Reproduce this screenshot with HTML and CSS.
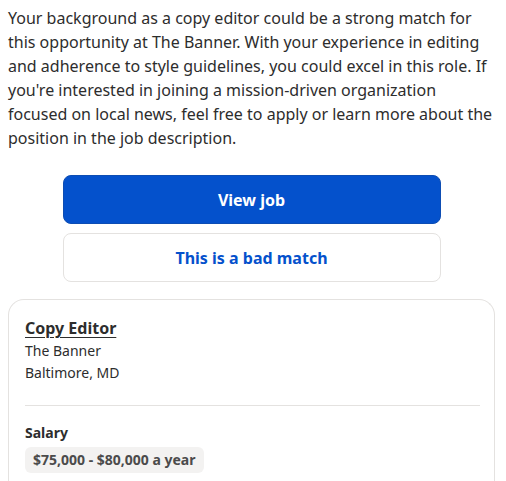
FILE: index.html
```html
<!DOCTYPE html>
<html lang="en">
<head>
<meta charset="utf-8">
<title>Job match</title>
<link rel="stylesheet" href="styles.css">
</head>
<body>
<div class="page">
  <p class="intro">Your background as a copy editor could be a strong match for this opportunity at The Banner. With your experience in editing and adherence to style guidelines, you could excel in this role. If you're interested in joining a mission-driven organization focused on local news, feel free to apply or learn more about the position in the job description.</p>
  <div class="actions">
    <button class="btn btn-primary">View job</button>
    <button class="btn btn-secondary">This is a bad match</button>
  </div>
  <div class="card">
    <div class="card-head">
      <a class="job-title" href="#">Copy Editor</a>
      <div class="meta">The Banner</div>
      <div class="meta">Baltimore, MD</div>
    </div>
    <div class="card-section">
      <div class="section-label">Salary</div>
      <span class="pill">$75,000 - $80,000 a year</span>
    </div>
  </div>
</div>
</body>
</html>
```
FILE: styles.css
```css
* { box-sizing: border-box; }
html, body { margin: 0; background: #fff; }
body {
  font-family: "Noto Sans", "Open Sans", sans-serif;
  color: #2d2d2d;
}
.page {
  padding: 6px 11px 0 8px;
}
.intro {
  margin: 0;
  font-size: 16px;
  line-height: 24px;
}
.actions {
  display: flex;
  flex-direction: column;
  align-items: center;
  gap: 9px;
  margin-top: 25px;
}
.btn {
  width: 378px;
  height: 49px;
  border-radius: 8px;
  font-family: inherit;
  font-size: 16px;
  font-weight: 700;
  cursor: pointer;
}
.btn-primary {
  background: #0451cc;
  color: #fff;
  border: 1px solid #0d4db3;
}
.btn-secondary {
  background: #fff;
  color: #0451cc;
  border: 1px solid #e4e2e0;
}
.card {
  margin-top: 17px;
  border: 1px solid #e4e2e0;
  border-bottom: none;
  border-radius: 16px 16px 0 0;
  padding: 16px 14px 20px 16px;
}
.card-head {
  padding-bottom: 21px;
  border-bottom: 1px solid #e4e2e0;
}
.job-title {
  display: block;
  color: #2d2d2d;
  font-size: 16px;
  line-height: 24px;
  font-weight: 700;
  text-decoration: underline;
  text-underline-offset: 3px;
}
.meta {
  font-size: 14px;
  line-height: 22px;
}
.card-section {
  padding-top: 16px;
}
.section-label {
  font-size: 14px;
  line-height: 22px;
  font-weight: 700;
}
.pill {
  display: inline-block;
  margin-top: 3px;
  padding: 2px 8px;
  background: #f3f2f1;
  color: #4b4b4b;
  border-radius: 6px;
  font-size: 14px;
  line-height: 22px;
  font-weight: 700;
}
```
